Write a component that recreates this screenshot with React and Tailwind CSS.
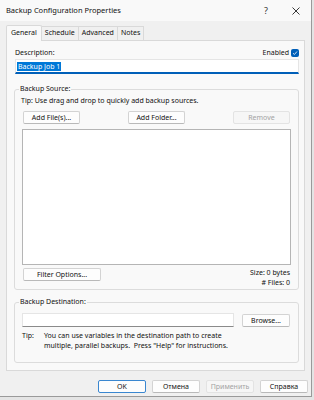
import React from "react";

const font = { fontFamily: '"Noto Sans", "Open Sans", sans-serif' };

function Btn({ children, w = "w-[57px]", disabled, primary }) {
  return (
    <button
      className={`${w} h-[13px] flex items-center justify-center rounded-[2px] border text-[7px] leading-none ${
        disabled
          ? "border-[#e3e3e3] bg-[#f6f6f6] text-[#a3a3a3]"
          : primary
          ? "border-[#3a87d0] bg-[#fdfdfd] text-[#111]"
          : "border-[#d3d3d3] border-b-[#b9b9b9] bg-[#fdfdfd] text-[#111]"
      }`}
    >
      {children}
    </button>
  );
}

function Group({ title, className, children }) {
  return (
    <fieldset className={`border border-[#dcdcdc] rounded-[3px] ml-[7px] mr-[5px] ${className}`}>
      <legend className="ml-[4px] px-[1px] text-[7px] leading-[8px] text-[#111]">{title}</legend>
      {children}
    </fieldset>
  );
}

export default function App() {
  return (
    <div className="w-[314px] h-[400px] bg-[#e4e4e4] text-[#111]" style={font}>
      <div className="w-[312px] h-[397px] bg-[#f0f0f0] border-r border-b border-[#9a9a9a] flex flex-col">
        {/* title bar */}
        <div className="h-[21px] bg-[#f9f9f9] flex items-center pl-[6px] pr-[11px]">
          <span className="text-[7.5px] flex-1">Backup Configuration Properties</span>
          <span className="text-[9px] text-[#333] mr-[24px]">?</span>
          <svg width="8" height="8" viewBox="0 0 8 8">
            <path d="M0.5 0.5 L7.5 7.5 M7.5 0.5 L0.5 7.5" stroke="#222" strokeWidth="0.9" />
          </svg>
        </div>

        {/* tabs */}
        <div className="flex pl-[6px] mt-[3px] h-[16px] items-end text-[7px]">
          <div className="h-[16px] px-[4px] flex items-center border border-b-0 border-[#d9d9d9] bg-[#f9f9f9] rounded-t-[2px] relative top-[1px]">
            General
          </div>
          <div className="h-[14px] px-[3px] flex items-center border border-l-0 border-b-0 border-[#d9d9d9]">Schedule</div>
          <div className="h-[14px] px-[3px] flex items-center border border-l-0 border-b-0 border-[#d9d9d9]">Advanced</div>
          <div className="h-[14px] px-[3px] flex items-center border border-l-0 border-b-0 border-[#d9d9d9]">Notes</div>
        </div>

        {/* panel */}
        <div className="mx-[6px] h-[331px] border border-[#d9d9d9] bg-[#f9f9f9] flex flex-col">
          <div className="flex items-center justify-between pl-[8px] pr-[5px] mt-[7px] h-[10px] text-[7px]">
            <span>Description:</span>
            <span className="flex items-center gap-[2px]">
              Enabled
              <span className="w-[8px] h-[8px] rounded-[2px] bg-[#005fb8] flex items-center justify-center">
                <svg width="6" height="6" viewBox="0 0 6 6">
                  <path d="M1 3.2 L2.4 4.5 L5 1.5" stroke="white" strokeWidth="0.8" fill="none" />
                </svg>
              </span>
            </span>
          </div>
          <div className="ml-[8px] mr-[5px] mt-[1px] h-[15px] bg-white border border-[#e5e5e5] border-b-[2px] border-b-[#005fb8] flex items-center px-[1px]">
            <span className="bg-[#0078d7] text-white text-[7px] leading-[9px] px-[1px]">Backup Job 1</span>
          </div>

          <Group title="Backup Source:" className="mt-[11px] pb-[1px]">
            <div className="pl-[6px] text-[7px] leading-[10px] mt-[3px]">
              Tip: Use drag and drop to quickly add backup sources.
            </div>
            <div className="flex justify-between pl-[8px] pr-[8px] mt-[5px]">
              <Btn>Add File(s)...</Btn>
              <Btn>Add Folder...</Btn>
              <Btn disabled>Remove</Btn>
            </div>
            <div className="ml-[7px] mr-[7px] mt-[5px] h-[136px] bg-white border border-[#b5b5b5]" />
            <div className="flex justify-between items-start pl-[8px] pr-[8px] mt-[3px]">
              <Btn w="w-[78px]">Filter Options...</Btn>
              <div className="text-right text-[7px] leading-[10px]">
                <div>Size: 0 bytes</div>
                <div># Files: 0</div>
              </div>
            </div>
          </Group>

          <Group title="Backup Destination:" className="mt-[8px] pb-[11px]">
            <div className="flex items-center pl-[7px] pr-[8px] mt-[7px] gap-[8px]">
              <div className="flex-1 h-[14px] bg-white border border-[#e5e5e5] border-b-[#8a8a8a]" />
              <Btn w="w-[48px]">Browse...</Btn>
            </div>
            <div className="flex pl-[7px] mt-[4px] text-[7px] leading-[10px]">
              <span className="w-[22px]">Tip:</span>
              <span className="w-[200px]">
                You can use variables in the destination path to create multiple, parallel backups.&nbsp; Press "Help" for instructions.
              </span>
            </div>
          </Group>
        </div>

        {/* bottom buttons */}
        <div className="flex justify-end gap-[6px] pr-[3px] mt-[9px]">
          <Btn w="w-[48px]" primary>OK</Btn>
          <Btn w="w-[48px]">Отмена</Btn>
          <Btn w="w-[48px]" disabled>Применить</Btn>
          <Btn w="w-[48px]">Справка</Btn>
        </div>
      </div>
    </div>
  );
}
